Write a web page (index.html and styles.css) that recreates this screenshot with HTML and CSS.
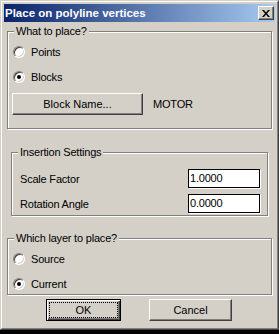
FILE: index.html
```html
<!DOCTYPE html>
<html>
<head>
<meta charset="utf-8">
<link rel="stylesheet" href="styles.css">
</head>
<body>
<div class="window">
  <div class="frame">
    <div class="titlebar">
      <span class="title">Place on polyline vertices</span>
      <span class="close">
        <svg width="8" height="7" viewBox="0 0 8 7"><path d="M0 0h2l2 2.5L6 0h2L5 3.5L8 7H6L4 4.5L2 7H0l3-3.5z" fill="#000"/></svg>
      </span>
    </div>
    <fieldset class="group g1">
      <legend>What to place?</legend>
      <div class="radio-row first"><span class="radio"></span><span>Points</span></div>
      <div class="radio-row second"><span class="radio checked"></span><span>Blocks</span></div>
      <div class="block-row">
        <button class="btn block-btn">Block Name...</button>
        <span class="motor">MOTOR</span>
      </div>
    </fieldset>
    <fieldset class="group g2">
      <legend>Insertion Settings</legend>
      <div class="field-row first"><span>Scale Factor</span><span class="edit">1.0000</span></div>
      <div class="field-row second"><span>Rotation Angle</span><span class="edit">0.0000</span></div>
    </fieldset>
    <fieldset class="group g3">
      <legend>Which layer to place?</legend>
      <div class="radio-row first"><span class="radio"></span><span>Source</span></div>
      <div class="radio-row second"><span class="radio checked"></span><span>Current</span></div>
    </fieldset>
    <div class="buttons">
      <button class="btn ok default">OK</button>
      <button class="btn cancel">Cancel</button>
    </div>
  </div>
</div>
</body>
</html>
```
FILE: styles.css
```css
html, body {
  margin: 0;
  padding: 0;
  background: #000;
}
body {
  font-family: "Liberation Sans", Arial, sans-serif;
  font-size: 11px;
  letter-spacing: -0.2px;
  color: #000;
}
.window {
  width: 279px;
  height: 330px;
  box-sizing: border-box;
  background: #D4D0C8;
  border: 1px solid;
  border-color: #D4D0C8 #404040 #404040 #D4D0C8;
}
.frame {
  height: 100%;
  box-sizing: border-box;
  border: 1px solid;
  border-color: #fff #808080 #808080 #fff;
  padding: 2px;
}
.titlebar {
  height: 18px;
  background: linear-gradient(to right, #0A246A, #A6CAF0);
  display: flex;
  align-items: center;
  justify-content: space-between;
  padding: 0 1px 0 1px;
}
.title {
  color: #fff;
  font-weight: bold;
  font-size: 11.5px;
  letter-spacing: 0;
  line-height: 13px;
}
.close {
  width: 16px;
  height: 14px;
  box-sizing: border-box;
  background: #D4D0C8;
  border: 1px solid;
  border-color: #fff #404040 #404040 #fff;
  box-shadow: inset -1px -1px 0 #808080;
  display: flex;
  align-items: center;
  justify-content: center;
}
.close svg { display: block; margin-left: -1px; }
.group {
  border: 1px solid #808080;
  box-shadow: 1px 1px 0 #fff, inset 1px 1px 0 #fff;
  padding: 0;
  min-inline-size: 0;
}
.group legend {
  padding: 0 2px;
  margin-left: 6px;
  line-height: 13px;
  background: #D4D0C8;
}
.g1 {
  margin: 3px 3px 0 3px;
  padding-bottom: 13px;
}
.g2 {
  margin: 17px 7px 0 7px;
  padding-bottom: 2px;
}
.g3 {
  margin: 16px 3px 0 3px;
  padding-bottom: 2px;
}
.radio-row {
  display: flex;
  align-items: center;
  gap: 6px;
  height: 16px;
  padding-left: 5px;
}
.radio-row.first { margin-top: 6px; }
.radio-row.second { margin-top: 9px; }
.radio {
  width: 12px;
  height: 12px;
  box-sizing: border-box;
  border-radius: 50%;
  border: 1px solid;
  border-color: #808080 #fff #fff #808080;
  background: #fff;
  box-shadow: inset 1px 1px 0 #404040, inset -1px -1px 0 #D4D0C8;
  position: relative;
  flex: none;
}
.radio.checked::after {
  content: "";
  position: absolute;
  left: 3px;
  top: 3px;
  width: 4px;
  height: 4px;
  border-radius: 50%;
  background: #000;
}
.block-row {
  display: flex;
  align-items: center;
  margin-top: 8px;
  padding-left: 4px;
  gap: 10px;
}
.btn {
  font: inherit;
  color: #000;
  background: #D4D0C8;
  border: 1px solid;
  border-color: #fff #404040 #404040 #fff;
  box-shadow: inset -1px -1px 0 #808080;
  padding: 0;
  height: 22px;
  box-sizing: border-box;
}
.block-btn { width: 131px; }
.field-row {
  display: flex;
  align-items: center;
  justify-content: space-between;
  height: 19px;
  padding: 0 7px 0 8px;
}
.field-row.first { margin-top: 10px; }
.field-row.second { margin-top: 6px; }
.edit {
  width: 72px;
  height: 19px;
  box-sizing: border-box;
  background: #fff;
  border: 1px solid #000;
  box-shadow: 1px 1px 0 #fff;
  padding-left: 1px;
  line-height: 17px;
}
.buttons {
  display: flex;
  margin-top: 4px;
  padding-left: 42px;
  gap: 28px;
}
.ok { width: 75px; }
.cancel { width: 83px; }
.btn.default {
  border-color: #000;
  box-shadow: inset 1px 1px 0 #fff, inset -1px -1px 0 #404040, inset -2px -2px 0 #808080;
  outline: 1px dotted #000;
  outline-offset: -4px;
}
```
